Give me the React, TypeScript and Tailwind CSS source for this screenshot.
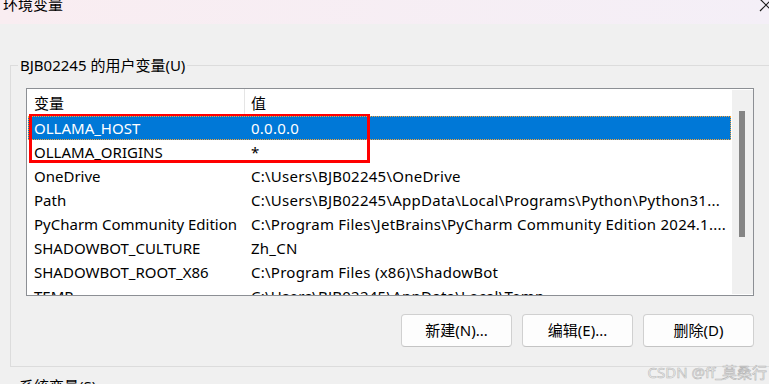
import React from "react";

const rows: [string, string][] = [
  ["OLLAMA_HOST", "0.0.0.0"],
  ["OLLAMA_ORIGINS", "*"],
  ["OneDrive", "C:\\Users\\BJB02245\\OneDrive"],
  ["Path", "C:\\Users\\BJB02245\\AppData\\Local\\Programs\\Python\\Python31..."],
  ["PyCharm Community Edition", "C:\\Program Files\\JetBrains\\PyCharm Community Edition 2024.1...."],
  ["SHADOWBOT_CULTURE", "Zh_CN"],
  ["SHADOWBOT_ROOT_X86", "C:\\Program Files (x86)\\ShadowBot"],
  ["TEMP", "C:\\Users\\BJB02245\\AppData\\Local\\Temp"],
];

export default function App() {
  return (
    <div className="relative w-[769px] h-[384px] overflow-hidden bg-[#f0f0f0] text-[15px] text-black font-['Noto_Sans','Noto_Sans_CJK_SC',sans-serif]">
      {/* title bar */}
      <div className="h-[24px] bg-linear-to-r from-[#f9edf1] to-[#f4eff7] flex justify-between overflow-hidden">
        <div className="pl-[3px] -mt-[6px] leading-[20px] text-[15px] font-['Noto_Sans_CJK_SC',sans-serif]">环境变量</div>
        <svg width="14" height="14" viewBox="0 0 14 14" className="-mt-[2px] -mr-[4px]">
          <path d="M1 1 L13 13 M13 1 L1 13" stroke="#1a1a1a" strokeWidth="1.2" fill="none" />
        </svg>
      </div>

      {/* group box */}
      <div className="relative ml-[10px] mt-[41px] w-[780px] h-[302px] border border-[#dcdcdc]">
        <div className="absolute left-[7px] -top-[11px] px-[2px] bg-[#f0f0f0] leading-[20px]">
          BJB02245 的用户变量(U)
        </div>

        {/* list box */}
        <div className="relative ml-[15px] mt-[22px] w-[728px] h-[208px] border border-[#8c8f94] bg-white flex">
          <div className="flex-1 overflow-hidden">
            <div className="h-[27px] flex items-center">
              <div className="w-[218px] h-full pl-[7px] pt-[2px] flex items-center border-r border-[#e5e5e5]">变量</div>
              <div className="pl-[6px] pt-[2px]">值</div>
            </div>
            {rows.map(([k, v], i) => (
              <div
                key={k}
                className={
                  i === 0
                    ? "mx-[1px] h-[24px] flex items-center whitespace-nowrap bg-[#0078d7] text-white outline-1 outline-dotted outline-[#f5a33a] -outline-offset-1"
                    : "mx-[1px] h-[24px] flex items-center whitespace-nowrap"
                }
              >
                <div className="w-[217px] pl-[6px] shrink-0">{k}</div>
                <div className="pl-[6px] tracking-[0.25px]">{v}</div>
              </div>
            ))}
          </div>
          <div className="w-[21px] mt-[1px] mb-[1px] bg-[#f0f0f0] relative">
            <div className="absolute left-[7px] top-[21px] w-[6px] h-[126px] bg-[#858585]" />
          </div>
          {/* red highlight */}
          <div className="absolute left-[2px] top-[25px] w-[341px] h-[49px] border-[3px] border-t-[2px] border-[#ff0000]" />
        </div>

        {/* buttons */}
        <div className="ml-[15px] mt-[18px] w-[728px] flex justify-end gap-[10px]">
          {["新建(N)...", "编辑(E)...", "删除(D)"].map((t) => (
            <div
              key={t}
              className="w-[111px] h-[33px] rounded-[4px] border border-[#d0d0d0] border-b-[#c4c4c4] bg-[#fdfdfd] flex items-center justify-center"
            >
              {t}
            </div>
          ))}
        </div>
      </div>

      <div className="pl-[19px] mt-[9px] leading-[20px]">系统变量(S)</div>

      <div className="absolute right-[2px] bottom-[3px] text-[15px] leading-[18px] text-[#f6f6f6] [-webkit-text-stroke:0.6px_#b8b8b8] font-['Noto_Sans','Noto_Sans_CJK_SC',sans-serif]">
        CSDN @ff_莫桑行
      </div>
    </div>
  );
}
